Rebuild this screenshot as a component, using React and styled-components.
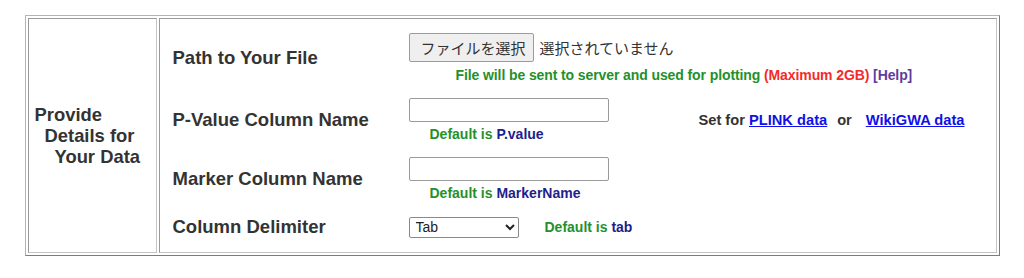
import React from "react";
import styled, { createGlobalStyle } from "styled-components";

const Global = createGlobalStyle`
  html, body { margin: 0; padding: 0; background: #fff; }
  body { font-family: "Liberation Sans", Arial, sans-serif; }
`;

const Page = styled.div`
  padding-top: 15px;
`;

const FormTable = styled.div`
  width: 975px;
  box-sizing: border-box;
  margin: 0 auto;
  display: grid;
  grid-template-columns: 129px 838px;
  gap: 2px;
  padding: 2px;
  border: 1px solid;
  border-color: #b4b4b4 #7c7c7c #7c7c7c #b4b4b4;
`;

const Cell = styled.div`
  box-sizing: border-box;
  border: 1px solid;
  border-color: #9a9a9a #c4c4c4 #c4c4c4 #9a9a9a;
`;

const SideCell = styled(Cell)`
  display: flex;
  flex-direction: column;
  justify-content: center;
  padding-left: 6px;
  font-weight: bold;
  font-size: 18.4px;
  color: #333;
  line-height: 21px;
`;

const SideLine = styled.div`
  padding-left: ${(p) => p.$indent || 0}px;
  white-space: nowrap;
`;

const MainCell = styled(Cell)`
  display: flex;
  flex-direction: column;
  gap: 15px;
  padding: 14px 14px 14px 13px;
`;

const FieldRow = styled.div`
  display: grid;
  grid-template-columns: 236px 271px 1fr;
  align-items: center;
`;

const Label = styled.div`
  font-size: 18.5px;
  font-weight: bold;
  color: #333;
  white-space: nowrap;
`;

const Field = styled.div`
  grid-column: ${(p) => (p.$wide ? "span 2" : "auto")};
  display: flex;
  flex-direction: column;
  align-items: flex-start;
`;

const InlineField = styled.div`
  display: flex;
  align-items: center;
  gap: 26px;
`;

const FilePicker = styled.div`
  display: flex;
  align-items: center;
  gap: 6px;
  font-family: "Noto Sans CJK JP", "Liberation Sans", sans-serif;
  font-size: 15px;
  color: #333;
`;

const FileButton = styled.button`
  box-sizing: border-box;
  width: 125px;
  height: 29px;
  padding: 0 0 0 4px;
  background: #efefef;
  border: 1px solid #9c9c9c;
  border-radius: 2px;
  font-family: inherit;
  font-size: 15px;
  color: #333;
  cursor: pointer;
`;

const FileStatus = styled.span`
  white-space: nowrap;
`;

const TextInput = styled.input`
  box-sizing: border-box;
  width: 200px;
  height: 24px;
  border: 1px solid #9a9a9a;
  border-radius: 2px;
  padding: 1px 4px;
  font-family: "Liberation Sans", Arial, sans-serif;
  font-size: 14px;
  outline: none;
`;

const Select = styled.select`
  box-sizing: border-box;
  width: 110px;
  height: 21px;
  border: 1px solid #8a8a8a;
  border-radius: 2px;
  padding-left: 2px;
  font-family: "Liberation Sans", Arial, sans-serif;
  font-size: 14px;
  color: #222;
  background: #fff;
`;

const Note = styled.div`
  margin-top: ${(p) => p.$gap ?? 4}px;
  margin-left: ${(p) => p.$indent ?? 21}px;
  font-size: 14px;
  font-weight: bold;
  color: #24902a;
  white-space: nowrap;
  line-height: 16px;
  letter-spacing: ${(p) => (p.$tight ? "-0.1px" : "normal")};
`;

const InlineNote = styled(Note)`
  margin: 0;
`;

const Value = styled.span`
  color: #1e1e8c;
`;

const Warning = styled.span`
  color: #f42a2a;
`;

const HelpLink = styled.a`
  color: #613c9c;
  text-decoration: none;
`;

const PresetLine = styled.div`
  justify-self: center;
  margin-left: 2px;
  font-size: 14.67px;
  font-weight: bold;
  color: #333;
  white-space: nowrap;
`;

const PresetLink = styled.a`
  color: #1010e8;
  text-decoration: underline;
`;

const Or = styled.span`
  margin: 0 ${(p) => p.$right}px 0 ${(p) => p.$left}px;
`;

export default function App() {
  return (
    <>
      <Global />
      <Page>
        <FormTable>
          <SideCell>
            <SideLine>Provide</SideLine>
            <SideLine $indent={10}>Details for</SideLine>
            <SideLine $indent={20}>Your Data</SideLine>
          </SideCell>
          <MainCell>
            <FieldRow>
              <Label>Path to Your File</Label>
              <Field $wide>
                <FilePicker>
                  <FileButton type="button">ファイルを選択</FileButton>
                  <FileStatus>選択されていません</FileStatus>
                </FilePicker>
                <Note $gap={5} $indent={47} $tight>
                  File will be sent to server and used for plotting{" "}
                  <Warning>(Maximum 2GB)</Warning>{" "}
                  <HelpLink href="#help">[Help]</HelpLink>
                </Note>
              </Field>
            </FieldRow>
            <FieldRow>
              <Label>P-Value Column Name</Label>
              <Field>
                <TextInput type="text" />
                <Note>
                  Default is <Value>P.value</Value>
                </Note>
              </Field>
              <PresetLine>
                Set for <PresetLink href="#plink">PLINK data</PresetLink>
                <Or $left={10} $right={14}>or</Or>
                <PresetLink href="#wikigwa">WikiGWA data</PresetLink>
              </PresetLine>
            </FieldRow>
            <FieldRow>
              <Label>Marker Column Name</Label>
              <Field>
                <TextInput type="text" />
                <Note>
                  Default is <Value>MarkerName</Value>
                </Note>
              </Field>
            </FieldRow>
            <FieldRow>
              <Label>Column Delimiter</Label>
              <InlineField>
                <Select defaultValue="tab">
                  <option value="tab">Tab</option>
                  <option value="comma">Comma</option>
                  <option value="space">Space</option>
                </Select>
                <InlineNote>
                  Default is <Value>tab</Value>
                </InlineNote>
              </InlineField>
            </FieldRow>
          </MainCell>
        </FormTable>
      </Page>
    </>
  );
}
